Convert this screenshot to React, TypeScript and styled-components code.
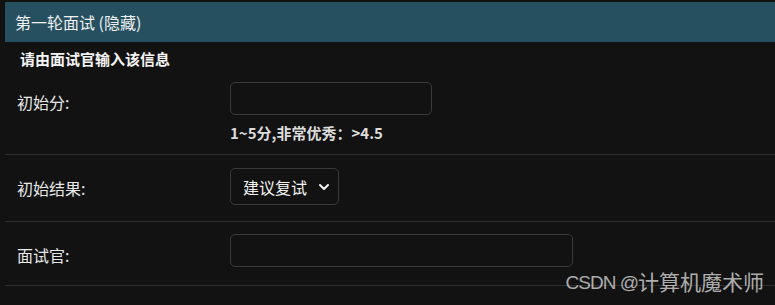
import React from "react";
import styled, { createGlobalStyle } from "styled-components";
import { ChevronDown } from "lucide-react";

const Global = createGlobalStyle`
  html, body { margin: 0; padding: 0; background: #121212; }
  body { font-family: "Noto Sans CJK SC", "Noto Sans", sans-serif; color: #e4e4e4; }
  * { box-sizing: border-box; }
`;

const Page = styled.div`
  position: relative;
  width: 775px;
  height: 305px;
  overflow: hidden;
  padding: 2px 0 0 5px;
  background: #121212;
`;

const Header = styled.div`
  height: 40px;
  background: #264f5f;
  display: flex;
  align-items: center;
  padding-left: 10px;
  font-size: 16px;
  color: #eef1f2;
  font-weight: 400;
`;

const Description = styled.div`
  padding: 8px 15px 8px 15px;
  font-size: 15px;
  line-height: 18px;
  color: #f4f4f4;
  font-weight: 700;
`;

const Row = styled.div<{ $top: number; $bottom: number }>`
  display: grid;
  grid-template-columns: 225px 1fr;
  align-items: start;
  padding: ${(p) => p.$top}px 0 ${(p) => p.$bottom}px 0;
  border-bottom: 1px solid #2e2e2e;
`;

const Label = styled.div<{ $offset: number }>`
  padding: ${(p) => p.$offset}px 0 0 12px;
  font-size: 16px;
  line-height: 20px;
  color: #e8e8e8;
`;

const Field = styled.div`
  display: flex;
  flex-direction: column;
  align-items: flex-start;
`;

const Input = styled.input<{ $w: number }>`
  width: ${(p) => p.$w}px;
  height: 33px;
  background: #121212;
  border: 1px solid #3a3a3a;
  border-radius: 5px;
  outline: none;
  color: #e6e6e6;
  padding: 0 10px;
  font-size: 15px;
`;

const Help = styled.div`
  margin-top: 8px;
  font-size: 15px;
  line-height: 20px;
  color: #dcdcdc;
  font-weight: 700;
`;

const Select = styled.div`
  height: 37px;
  width: 109px;
  border: 1px solid #3a3a3a;
  border-radius: 5px;
  display: flex;
  align-items: center;
  justify-content: space-between;
  padding: 0 6px 0 12px;
  font-size: 16px;
  color: #f4f4f4;
  font-weight: 400;
`;

const Watermark = styled.div`
  position: absolute;
  right: 11px;
  bottom: 10px;
  font-size: 21px;
  line-height: 24px;
  color: rgba(235, 235, 235, 0.72);
  font-family: "Liberation Sans", "Noto Sans CJK SC", sans-serif;
  display: flex;
  align-items: center;
`;

const Latin = styled.span`
  font-size: 19px;
  letter-spacing: -1px;
`;

export default function App() {
  return (
    <>
      <Global />
      <Page>
        <Header>第一轮面试 (隐藏)</Header>
        <Description>请由面试官输入该信息</Description>
        <Row $top={6} $bottom={11}>
          <Label $offset={10}>初始分:</Label>
          <Field>
            <Input $w={202} />
            <Help>1~5分,非常优秀：&gt;4.5</Help>
          </Field>
        </Row>
        <Row $top={13} $bottom={16}>
          <Label $offset={10}>初始结果:</Label>
          <Field>
            <Select>
              建议复试
              <ChevronDown size={16} strokeWidth={3} color="#f2f2f2" />
            </Select>
          </Field>
        </Row>
        <Row $top={12} $bottom={18}>
          <Label $offset={11}>面试官:</Label>
          <Field>
            <Input $w={343} />
          </Field>
        </Row>
        <Watermark>
          <Latin>CSDN @</Latin>计算机魔术师
        </Watermark>
      </Page>
    </>
  );
}
